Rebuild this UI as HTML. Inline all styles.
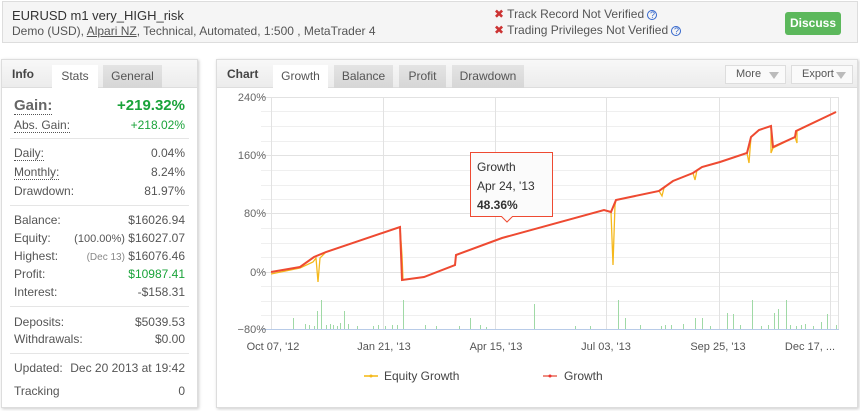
<!DOCTYPE html>
<html><head><meta charset="utf-8"><style>
*{box-sizing:border-box;margin:0;padding:0}
body{width:860px;height:411px;background:#fff;font-family:"Liberation Sans","DejaVu Sans",sans-serif;font-size:12px;color:#555;position:relative;overflow:hidden}
.abs{position:absolute}
.hdr{left:2px;top:1px;width:856px;height:42px;border:1px solid #ddd;background:#f5f5f5}
.panel{border:1px solid #ddd;background:#fff;box-shadow:1px 1px 3px #ccc}
.tabbar{position:absolute;left:0;top:0;right:0;height:28px;background:linear-gradient(#f8f8f8,#ececec);border-bottom:1px solid #ddd}
.tab{position:absolute;top:5px;height:23px;line-height:22px;text-align:center;background:linear-gradient(#e4e4e4,#d6d6d6);color:#555;font-size:12px}
.tab.on{background:#fff;height:24px}
.row{position:absolute;left:12px;right:12px;height:16px;line-height:16px;font-size:12px;color:#555}
.row span.r{position:absolute;right:0}
.sep{position:absolute;left:8px;right:8px;height:1px;background:#e5e5e5}
.dot{border-bottom:1px dotted #555}
.btn{position:absolute;top:5px;height:19px;border:1px solid #ddd;background:#fafafa;font-size:11px;line-height:17px;padding-left:10px;color:#555}
.tri{position:absolute;right:6px;top:6px;width:0;height:0;border-left:5px solid transparent;border-right:5px solid transparent;border-top:7px solid #bbb}
</style></head><body>
<div class="abs hdr">
 <div class="abs" style="left:9px;top:6px;font-size:13px;color:#333">EURUSD m1 very_HIGH_risk</div>
 <div class="abs" style="left:9px;top:22px;font-size:12px;color:#555">Demo (USD), <u>Alpari NZ</u>, Technical, Automated, 1:500 , MetaTrader 4</div>
 <div class="abs" style="left:491px;top:5px;font-size:12px;color:#555"><span style="color:#c33;font-weight:bold">✖</span> Track Record Not Verified <span style="color:#36c;font-size:9px;border:1px solid #36c;border-radius:50%;display:inline-block;width:10px;height:10px;line-height:8px;text-align:center">?</span></div>
 <div class="abs" style="left:491px;top:21px;font-size:12px;color:#555"><span style="color:#c33;font-weight:bold">✖</span> Trading Privileges Not Verified <span style="color:#36c;font-size:9px;border:1px solid #36c;border-radius:50%;display:inline-block;width:10px;height:10px;line-height:8px;text-align:center">?</span></div>
 <div class="abs" style="left:782px;top:10px;width:56px;height:23px;background:#5cb85c;border-radius:3px;color:#fff;font-weight:bold;font-size:12px;line-height:23px;text-align:center">Discuss</div>
</div>

<div class="abs panel" style="left:1px;top:59px;width:197px;height:349px">
 <div class="tabbar">
  <div class="abs" style="left:10px;top:7px;font-weight:bold;color:#444">Info</div>
  <div class="tab on" style="left:50px;width:46px">Stats</div>
  <div class="tab" style="left:101px;width:59px">General</div>
 </div>
 <div class="row" style="top:36px;height:20px;line-height:20px;font-size:15px;font-weight:bold;color:#666"><span class="dot" style="border-bottom-width:1px">Gain:</span><span class="r" style="color:#1aa33a">+219.32%</span></div>
 <div class="row" style="top:57px"><span class="dot">Abs. Gain:</span><span class="r" style="color:#1aa33a">+218.02%</span></div>
 <div class="sep" style="top:78px"></div>
 <div class="row" style="top:85px"><span class="dot">Daily:</span><span class="r">0.04%</span></div>
 <div class="row" style="top:104px"><span class="dot">Monthly:</span><span class="r">8.24%</span></div>
 <div class="row" style="top:123px">Drawdown:<span class="r">81.97%</span></div>
 <div class="sep" style="top:145px"></div>
 <div class="row" style="top:152px">Balance:<span class="r">$16026.94</span></div>
 <div class="row" style="top:170px">Equity:<span class="r"><span style="font-size:11px">(100.00%)</span> $16027.07</span></div>
 <div class="row" style="top:188px">Highest:<span class="r"><span style="font-size:10px;color:#888">(Dec 13)</span> $16076.46</span></div>
 <div class="row" style="top:206px">Profit:<span class="r" style="color:#1aa33a">$10987.41</span></div>
 <div class="row" style="top:224px">Interest:<span class="r">-$158.31</span></div>
 <div class="sep" style="top:246px"></div>
 <div class="row" style="top:254px">Deposits:<span class="r">$5039.53</span></div>
 <div class="row" style="top:271px">Withdrawals:<span class="r">$0.00</span></div>
 <div class="sep" style="top:293px"></div>
 <div class="row" style="top:300px">Updated:<span class="r">Dec 20 2013 at 19:42</span></div>
 <div class="row" style="top:323px">Tracking<span class="r">0</span></div>
</div>

<div class="abs panel" style="left:216px;top:59px;width:642px;height:349px">
 <div class="tabbar">
  <div class="abs" style="left:10px;top:7px;font-weight:bold;color:#444">Chart</div>
  <div class="tab on" style="left:56px;width:55px">Growth</div>
  <div class="tab" style="left:117px;width:59px">Balance</div>
  <div class="tab" style="left:182px;width:47px">Profit</div>
  <div class="tab" style="left:235px;width:72px">Drawdown</div>
  <div class="btn" style="left:508px;width:61px">More<div class="tri"></div></div>
  <div class="btn" style="left:574px;width:62px">Export<div class="tri"></div></div>
 </div>
</div>

<svg class="abs" style="left:0;top:0" width="860" height="411" font-family="Liberation Sans, sans-serif" font-size="11">
 <g stroke="#efefef" stroke-width="1">
  <line x1="261" y1="111.5" x2="839" y2="111.5"/><line x1="261" y1="126.5" x2="839" y2="126.5"/><line x1="261" y1="141.5" x2="839" y2="141.5"/>
  <line x1="261" y1="170.5" x2="839" y2="170.5"/><line x1="261" y1="185.5" x2="839" y2="185.5"/><line x1="261" y1="199.5" x2="839" y2="199.5"/>
  <line x1="261" y1="228.5" x2="839" y2="228.5"/><line x1="261" y1="243.5" x2="839" y2="243.5"/><line x1="261" y1="257.5" x2="839" y2="257.5"/>
  <line x1="261" y1="286.5" x2="839" y2="286.5"/><line x1="261" y1="301.5" x2="839" y2="301.5"/><line x1="261" y1="315.5" x2="839" y2="315.5"/>
 </g>
 <g stroke="#e2e2e2" stroke-width="1">
  <line x1="261" y1="97.5" x2="839" y2="97.5"/><line x1="261" y1="155.5" x2="839" y2="155.5"/><line x1="261" y1="213.5" x2="839" y2="213.5"/><line x1="261" y1="272.5" x2="839" y2="272.5"/>
  <line x1="271.5" y1="97" x2="271.5" y2="329"/><line x1="383.5" y1="97" x2="383.5" y2="329"/><line x1="495.5" y1="97" x2="495.5" y2="329"/><line x1="606.5" y1="97" x2="606.5" y2="329"/><line x1="719.5" y1="97" x2="719.5" y2="329"/><line x1="830.5" y1="97" x2="830.5" y2="329"/><line x1="838.5" y1="97" x2="838.5" y2="329"/>
 </g>
 <g stroke="#9fd9a5" stroke-width="1">
  <path d="M293.5 329V318M317.5 329V311M321.5 329V300M344.5 329V311M403.5 329V300M470.5 329V318M534.5 329V304M618.5 329V300M625.5 329V318M695.5 329V318M702.5 329V318M727.5 329V313M733.5 329V314M752.5 329V300M774.5 329V313M778.5 329V309M786.5 329V300M821.5 329V322M827.5 329V314M305.5 329V324M309.5 329V325M314.5 329V326M326.5 329V325M330.5 329V324M333.5 329V325M337.5 329V326M340.5 329V323M348.5 329V324M357.5 329V326M373.5 329V326M378.5 329V325M385.5 329V326M392.5 329V325M397.5 329V325M425.5 329V325M436.5 329V326M459.5 329V326M480.5 329V325M486.5 329V327M575.5 329V326M590.5 329V326M640.5 329V325M661.5 329V326M665.5 329V325M671.5 329V325M683.5 329V324M710.5 329V326M740.5 329V325M761.5 329V326M768.5 329V325M790.5 329V325M796.5 329V326M801.5 329V325M805.5 329V324M813.5 329V326M836.5 329V325"/>
 </g>
 <line x1="261" y1="329.5" x2="839" y2="329.5" stroke="#b8cbe8"/>
 <g fill="#666" text-anchor="end">
  <text x="266" y="101">240%</text><text x="266" y="159">160%</text><text x="266" y="217">80%</text><text x="266" y="276">0%</text><text x="266" y="333">−80%</text>
 </g>
 <g fill="#555" text-anchor="middle">
  <text x="273" y="350">Oct 07, '12</text><text x="384" y="350">Jan 21, '13</text><text x="496" y="350">Apr 15, '13</text><text x="606" y="350">Jul 03, '13</text><text x="718" y="350">Sep 25, '13</text><text x="810" y="350">Dec 17, ...</text>
 </g>
 <polyline fill="none" stroke="#f5b81c" stroke-width="1.3" points="271,274 300,268 313,262 316,258 318,282 320,258 326,252 400,227 402,255 403,280 424,277 455,265 456,255 502,238 604,210 611,212 613,265 615,205 616,200 659,191 662,196 664,188 673,181 693,173 695,180 697,170 702,167 720,162 747,153 749,163 751,137 759,130 771,126 771,153 773,148 795,137 797,143 797,131 836,112"/>
 <polyline fill="none" stroke="#ee4a32" stroke-width="2" points="271,272 300,267 314,257 326,252 400,227 402,280 424,277 455,265 456,255 502,238 604,210 611,212 616,200 659,191 673,181 693,173 702,167 720,162 747,153 751,137 759,130 771,126 773,147 795,137 796,131 836,112"/>
 <g>
  <path d="M470.5 152.5H552.5V216.5H512.5L507 222L501.5 216.5H470.5Z" fill="#fbfbfb" stroke="#ee4a32" stroke-width="1"/>
  <text x="477" y="171" fill="#333" font-size="12">Growth</text>
  <text x="477" y="190" fill="#333" font-size="12">Apr 24, '13</text>
  <text x="477" y="209" fill="#333" font-size="12" font-weight="bold">48.36%</text>
 </g>
 <line x1="364" y1="376" x2="378" y2="376" stroke="#f7c94a" stroke-width="2"/><circle cx="371" cy="376" r="1.5" fill="#f5b81c"/>
 <text x="384" y="380" fill="#444" font-size="12">Equity Growth</text>
 <line x1="543" y1="376" x2="557" y2="376" stroke="#ee8d80" stroke-width="2"/><circle cx="550" cy="376" r="1.5" fill="#e33"/>
 <text x="564" y="380" fill="#444" font-size="12">Growth</text>
</svg>
</body></html>
